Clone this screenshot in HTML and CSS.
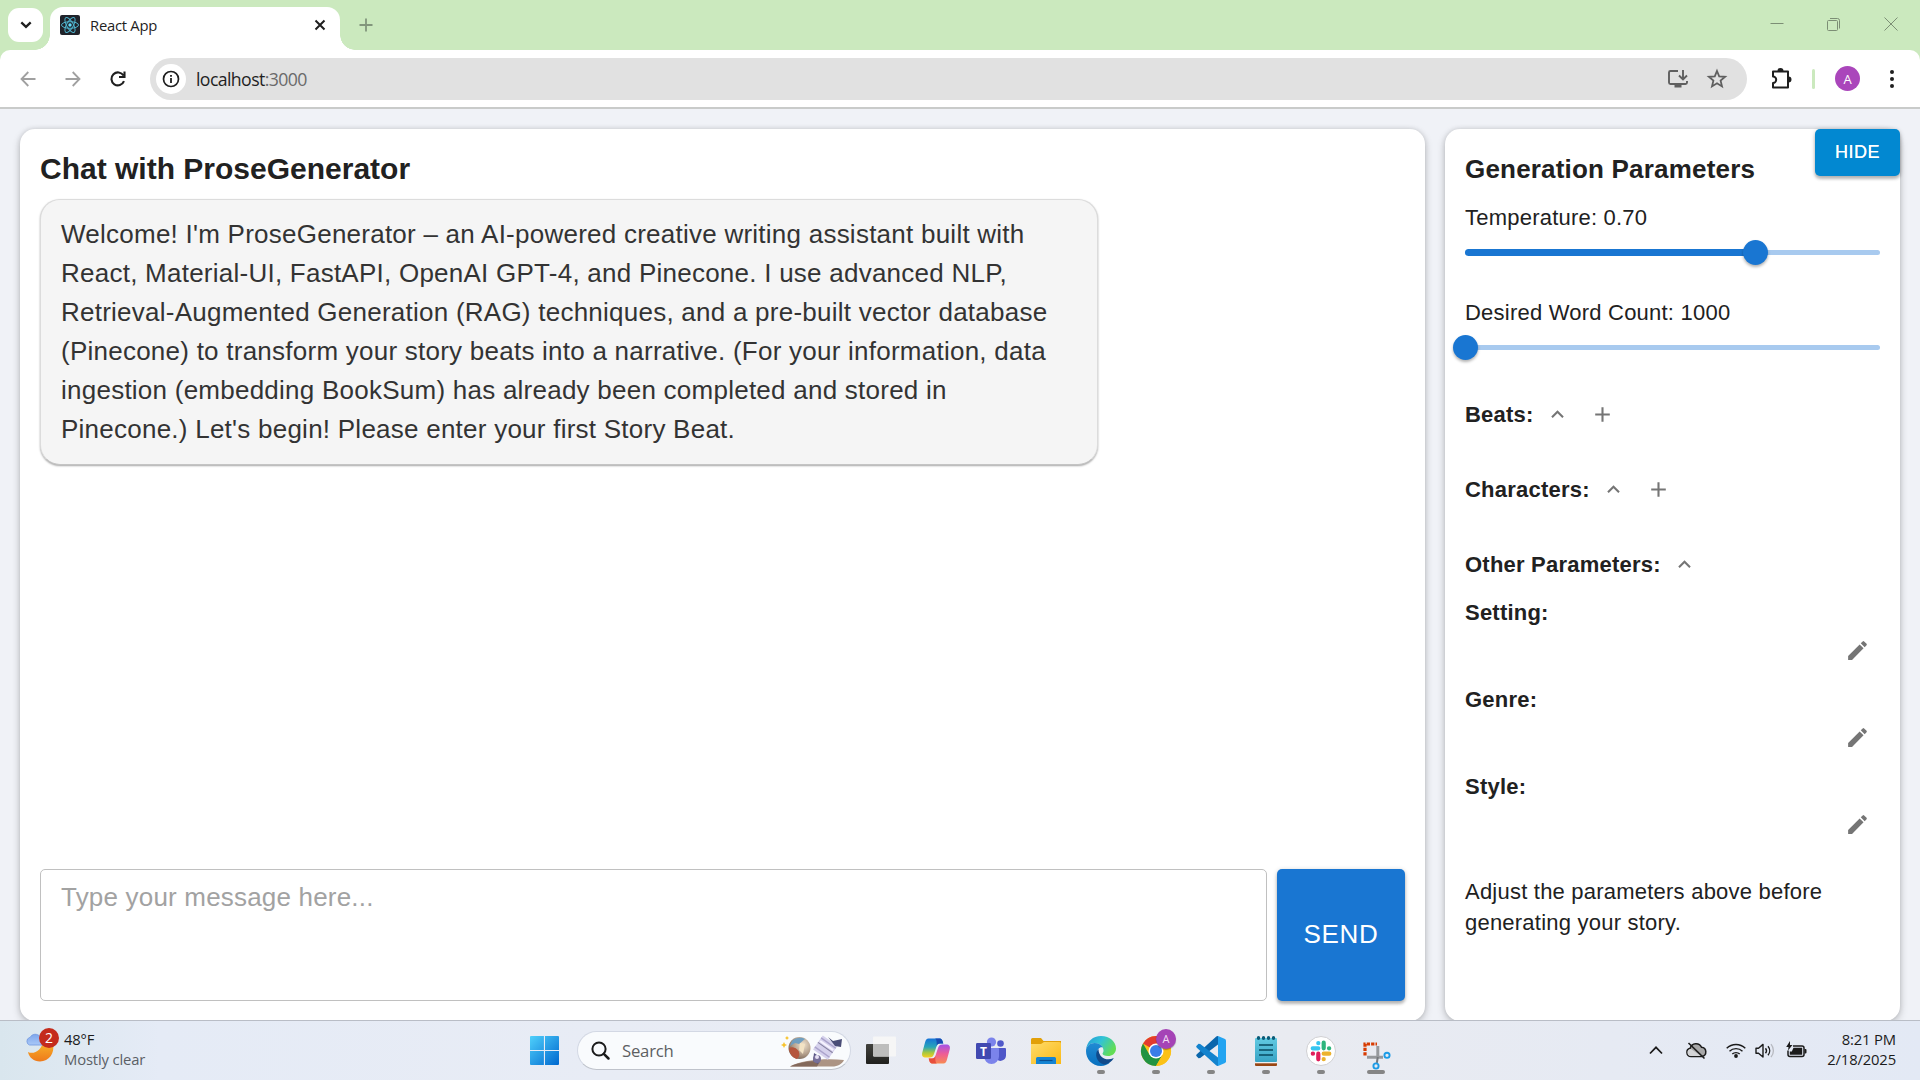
FILE: index.html
```
<!DOCTYPE html>
<html lang="en">
<head>
<meta charset="utf-8">
<title>React App</title>
<link rel="stylesheet" href="styles.css">
</head>
<body>
<header class="tabstrip">
  <button class="tab-search"><svg width="12" height="8" viewBox="0 0 12 8"><path d="M1.3 1.3 6 5.8l4.700-4.500" fill="none" stroke="#1f1f1f" stroke-width="2.300"/></svg></button>
  <div class="tab">
    <svg class="favicon" width="20" height="20" viewBox="0 0 20 20"><rect width="20" height="20" rx="2" fill="#20232a"/><g fill="none" stroke="#4fb3cc" stroke-width="1"><ellipse cx="10" cy="10" rx="8.500" ry="3.300"/><ellipse cx="10" cy="10" rx="8.500" ry="3.300" transform="rotate(60 10 10)"/><ellipse cx="10" cy="10" rx="8.500" ry="3.300" transform="rotate(120 10 10)"/></g><circle cx="10" cy="10" r="1.700" fill="#61dafb"/></svg>
    <span class="tab-title">React App</span>
    <svg class="tab-close" width="12" height="12" viewBox="0 0 12 12"><path d="M1.500 1.500l9 9m0-9l-9 9" stroke="#1f1f1f" stroke-width="2"/></svg>
  </div>
  <svg class="tab-new" width="14" height="14" viewBox="0 0 14 14"><path d="M7 .5v13M.5 7h13" stroke="#82967c" stroke-width="1.800"/></svg>
  <div class="window-controls">
    <svg width="14" height="14" viewBox="0 0 14 14"><path d="M.5 6.500h13" stroke="#7c8e75"/></svg>
    <svg width="14" height="14" viewBox="0 0 14 14"><rect x=".5" y="3.500" width="10" height="10" rx="1" fill="none" stroke="#7c8e75"/><path d="M3 1.500h7.500a2 2 0 0 1 2 2v8" fill="none" stroke="#7c8e75"/></svg>
    <svg width="14" height="14" viewBox="0 0 14 14"><path d="M.5.5l13 13m0-13l-13 13" stroke="#7c8e75"/></svg>
  </div>
</header>
<div class="toolbar-back">
<nav class="toolbar">
  <div class="nav-buttons">
    <svg width="16" height="16" viewBox="0 0 16 16"><path d="M8.300 1 1.500 8l6.800 7M1.500 8H15.500" fill="none" stroke="#a0a0a0" stroke-width="1.800"/></svg>
    <svg width="16" height="16" viewBox="0 0 16 16"><path d="M7.700 1l6.800 7-6.800 7M14.500 8H.5" fill="none" stroke="#a0a0a0" stroke-width="1.800"/></svg>
    <svg width="16" height="16" viewBox="0 0 16 16"><path d="M14 10.200A6.500 6.500 0 1 1 13.500 4.500M14.500.5V6H9" fill="none" stroke="#1f1f1f" stroke-width="2.100"/></svg>
  </div>
  <div class="omnibox">
    <span class="site-info"><svg width="18" height="18" viewBox="0 0 18 18"><circle cx="9" cy="9" r="7.500" fill="none" stroke="#1f1f1f" stroke-width="1.700"/><path d="M9 8v5M9 5v1.800" stroke="#1f1f1f" stroke-width="1.800"/></svg></span>
    <span class="url">localhost<span class="port">:3000</span></span>
    <svg class="install" width="22" height="20" viewBox="0 0 22 20"><path d="M11 2H3.500A1.500 1.500 0 0 0 2 3.500v10A1.500 1.500 0 0 0 3.500 15h15a1.500 1.500 0 0 0 1.500-1.500V12M16 1v9M12 6.500l4 4 4-4" fill="none" stroke="#5f5f5f" stroke-width="1.900"/><path d="M7.500 15h7v3.500h-7z" fill="#5f5f5f"/></svg>
    <svg width="20" height="20" viewBox="0 0 20 20"><path d="M10 2l2.200 5.400 5.900.4-4.500 3.800 1.400 5.800-5-3.100-5 3.100 1.400-5.800L1.900 7.800l5.900-.4z" fill="none" stroke="#5f5f5f" stroke-width="1.800"/></svg>
  </div>
  <svg class="puzzle" width="22" height="22" viewBox="0 0 22 22"><path d="M3 3.500h15v16H3V15a3.200 3.200 0 0 0 0-6.400z" fill="none" stroke="#1f1f1f" stroke-width="2" stroke-linejoin="round"/><path d="M7.500 3a3 3 0 0 1 6 0zM18.500 8.500a3 3 0 0 1 0 6z" fill="#1f1f1f"/></svg>
  <span class="divider"></span>
  <span class="avatar">A</span>
  <svg class="dots" width="4" height="20" viewBox="0 0 4 20"><g fill="#1f1f1f"><circle cx="2" cy="3" r="2"/><circle cx="2" cy="10" r="2"/><circle cx="2" cy="17" r="2"/></g></svg>
</nav>
</div>
<main class="page">
  <section class="chat">
    <h1>Chat with ProseGenerator</h1>
    <div class="bubble">Welcome! I'm ProseGenerator – an AI-powered creative writing assistant built with<br>React, Material-UI, FastAPI, OpenAI GPT-4, and Pinecone. I use advanced NLP,<br>Retrieval-Augmented Generation (RAG) techniques, and a pre-built vector database<br>(Pinecone) to transform your story beats into a narrative. (For your information, data<br>ingestion (embedding BookSum) has already been completed and stored in<br>Pinecone.) Let's begin! Please enter your first Story Beat.</div>
    <div class="composer">
      <div class="input">Type your message here...</div>
      <button class="send">SEND</button>
    </div>
  </section>
  <aside class="params">
    <button class="hide">HIDE</button>
    <h2>Generation Parameters</h2>
    <p class="label">Temperature: 0.70</p>
    <div class="slider"><span class="fill" style="width:70%"></span><span class="thumb" style="left:70%"></span></div>
    <p class="label count">Desired Word Count: 1000</p>
    <div class="slider"><span class="thumb" style="left:0%"></span></div>
    <div class="group first"><b>Beats:</b>
      <svg viewBox="0 0 24 24"><path d="m12 8-6 6 1.410 1.410L12 10.830l4.590 4.580L18 14z"/></svg>
      <svg class="add" viewBox="0 0 24 24"><path d="M19 13h-6v6h-2v-6H5v-2h6V5h2v6h6z"/></svg></div>
    <div class="group"><b>Characters:</b>
      <svg viewBox="0 0 24 24"><path d="m12 8-6 6 1.410 1.410L12 10.830l4.590 4.580L18 14z"/></svg>
      <svg class="add" viewBox="0 0 24 24"><path d="M19 13h-6v6h-2v-6H5v-2h6V5h2v6h6z"/></svg></div>
    <div class="group"><b>Other Parameters:</b>
      <svg viewBox="0 0 24 24"><path d="m12 8-6 6 1.410 1.410L12 10.830l4.590 4.580L18 14z"/></svg></div>
    <div class="field"><b>Setting:</b><svg viewBox="0 0 24 24"><path d="M3 17.250V21h3.750L17.810 9.940l-3.750-3.750zM20.710 7.040c.39-.39.39-1.020 0-1.410l-2.340-2.340a.9959.9959 0 0 0-1.410 0l-1.830 1.830 3.750 3.750z"/></svg></div>
    <div class="field"><b>Genre:</b><svg viewBox="0 0 24 24"><path d="M3 17.250V21h3.750L17.810 9.940l-3.750-3.750zM20.710 7.040c.39-.39.39-1.020 0-1.410l-2.340-2.340a.9959.9959 0 0 0-1.410 0l-1.830 1.830 3.750 3.750z"/></svg></div>
    <div class="field"><b>Style:</b><svg viewBox="0 0 24 24"><path d="M3 17.250V21h3.750L17.810 9.940l-3.750-3.750zM20.710 7.040c.39-.39.39-1.020 0-1.410l-2.340-2.340a.9959.9959 0 0 0-1.410 0l-1.830 1.830 3.750 3.750z"/></svg></div>
    <p class="hint">Adjust the parameters above before<br>generating your story.</p>
  </aside>
</main>
<footer class="taskbar">
  <div class="weather">
    <svg width="36" height="36" viewBox="0 0 36 36">
      <defs><linearGradient id="moon" x1="0" y1="0" x2="0" y2="1"><stop offset="0" stop-color="#f8b62a"/><stop offset="1" stop-color="#ee7a1b"/></linearGradient><linearGradient id="cloud" x1="0" y1="0" x2="0" y2="1"><stop offset="0" stop-color="#7ea6ec"/><stop offset="1" stop-color="#a9c8f7"/></linearGradient></defs>
      <path d="M3 24c6 3 14-2 15-11l10 3c2 9-4 17.500-13 17.500C9 33.500 4 29.500 3 24z" fill="url(#moon)"/>
      <path d="M4.500 17a4 4 0 0 1 0-7.500h.5a6 6 0 0 1 10-1 5.500 5.500 0 0 1 4 8.500z" fill="url(#cloud)" stroke="#6f97e0" stroke-width=".8"/>
      <circle cx="24" cy="10" r="10" fill="#c42b1c"/><text x="24" y="15" text-anchor="middle" class="badge-text">2</text>
    </svg>
    <div class="weather-text"><span>48°F</span><span class="muted">Mostly clear</span></div>
  </div>
  <div class="apps">
    <svg class="start" width="29" height="29" viewBox="0 0 29 29"><defs><linearGradient id="win" x1="0" y1="0" x2="1" y2="1"><stop offset="0" stop-color="#4fd0fb"/><stop offset="1" stop-color="#0068cf"/></linearGradient></defs><path d="M1 0h12.900v13.900H0V1a1 1 0 0 1 1-1zM15 0h13a1 1 0 0 1 1 1v12.900H15zM0 15h13.900v14H1a1 1 0 0 1-1-1zM15 15h14v13a1 1 0 0 1-1 1H15z" fill="url(#win)"/></svg>
    <div class="search">
      <svg width="19" height="19" viewBox="0 0 19 19"><circle cx="8" cy="8" r="6.600" fill="none" stroke="#1b1b1b" stroke-width="2"/><path d="M12.800 12.800l4.700 4.700" stroke="#1b1b1b" stroke-width="2.500" stroke-linecap="round"/></svg>
      <span>Search</span>
      <svg class="space" width="64" height="34" viewBox="0 0 64 34">
        <defs><radialGradient id="planet" cx=".65" cy=".35" r=".75"><stop offset="0" stop-color="#f0e3cf"/><stop offset=".6" stop-color="#b09c88"/><stop offset="1" stop-color="#6e5a4c"/></radialGradient></defs>
        <path d="M9 32.500C20 26 45 24 63 26c-2 4-6 6.500-12 6.500z" fill="#ac9484"/><path d="M9 32.500c8-4 20-6 30-5l-3 5z" fill="#83695b"/>
        <circle cx="18.500" cy="14" r="11" fill="url(#planet)"/><path d="M8 14c4-2 9 1 10 4s0 5-2 7c-4-1-8-5-8-11z" fill="#b5563d"/><path d="M11 7c4-4 10-4 13-2l-6 5-4-1-5 3z" fill="#719fc0"/><path d="M19 9l5 1-2 10-4-4z" fill="#f3e3c4"/>
        <g transform="rotate(35 44 14)"><rect x="35" y="5" width="18" height="17" fill="#d5d1ec"/><path d="M35 8h18M35 19h18" stroke="#aaa3cb" stroke-width="1.500"/><path d="M35 13.500h18" stroke="#85809f" stroke-width="1"/><path d="M36 11h16" stroke="#f6f3ff" stroke-width="2"/></g>
        <path d="M47 3l5 4 9-2-1 8-6-1-3-4z" fill="#4a4d77"/><path d="M33 19l6 4-2 7-5-3z" fill="#575584"/><circle cx="36" cy="25" r="4" fill="#777099"/><circle cx="36" cy="23" r="2" fill="#e7e1f5"/>
        <path d="M3 8l1 2 2 1-2 1-1 2-1-2-2-1 2-1zM6 2l.8 1.200 1.200.8-1.200.8L6 6l-.8-1.200L4 4l1.200-.8z" fill="#f7c32e"/>
      </svg>
    </div>
    <div class="app"><svg width="32" height="32" viewBox="0 0 32 32"><defs><linearGradient id="tv" x1="0" y1="0" x2="0" y2="1"><stop offset="0" stop-color="#42423e"/><stop offset="1" stop-color="#20201d"/></linearGradient></defs><rect x="1" y="9" width="23" height="20" rx="1" fill="url(#tv)"/><rect x="8" y="1.500" width="23" height="20" rx="1" fill="#f6f6f6"/><path d="M8 9h16v12.500H9l-1-1z" fill="#bdbdbc"/></svg></div>
    <div class="app"><svg width="30" height="30" viewBox="0 0 30 30"><defs><linearGradient id="cpa" x1="0" y1="0" x2="0" y2="1"><stop offset="0" stop-color="#1573d8"/><stop offset=".45" stop-color="#28a5b8"/><stop offset=".75" stop-color="#a8c83e"/><stop offset="1" stop-color="#f8cf21"/></linearGradient><linearGradient id="cpb" x1="0" y1="1" x2="0" y2="0"><stop offset="0" stop-color="#f88a52"/><stop offset=".5" stop-color="#ef5d95"/><stop offset="1" stop-color="#a353e8"/></linearGradient></defs><path d="M7.500 2.500H18c3 0 3.500 2 4.300 5H19c-2 0-3 1-3.700 3.500L13 18c-.8 2.500-2 3.500-4.500 3.500H5c-3.500 0-4.500-2-3.700-5L4 6.500c.7-2.500 1.700-4 3.500-4z" fill="url(#cpa)"/><path d="M14 2.500h4c3 0 3.500 2 4.300 5H19c-2 0-3 1-3.500 3C16 6 15.500 3 14 2.500z" fill="#174bb2"/><path d="M22.500 27.500H12c-3 0-3.500-2-4.300-5H11c2 0 3-1 3.700-3.500L17 12c.8-2.500 2-3.500 4.500-3.500H25c3.500 0 4.500 2 3.700 5L26 23.500c-.7 2.500-1.700 4-3.500 4z" fill="url(#cpb)"/><path d="M16 27.500h-4c-3 0-3.500-2-4.300-5H11c2 0 3-1 3.500-3-.5 4.500 0 7.500 1.500 8z" fill="#e84f3c"/></svg></div>
    <div class="app"><svg width="32" height="30" viewBox="0 0 32 30"><circle cx="25.500" cy="7.500" r="3.300" fill="#5059c9"/><path d="M21 12h9a1 1 0 0 1 1 1v6.500a5.500 5.500 0 0 1-10 3z" fill="#4f57c8"/><circle cx="16.500" cy="6" r="4.600" fill="#7b83eb"/><path d="M9 12h14a1 1 0 0 1 1 1v7.500a7.500 7.500 0 0 1-15 0z" fill="#7b83eb"/><rect x="1" y="7" width="15" height="16" rx="1.200" fill="#4149b1"/><text x="8.500" y="19.500" text-anchor="middle" class="teams-text">T</text></svg></div>
    <div class="app"><svg width="30" height="30" viewBox="0 0 30 30"><defs><linearGradient id="fol" x1="0" y1="0" x2="1" y2="1"><stop offset="0" stop-color="#ffdc6c"/><stop offset="1" stop-color="#fab915"/></linearGradient></defs><path d="M1.500 2H10l2.500 3H30v5H0V3.500A1.500 1.500 0 0 1 1.500 2z" fill="#e2a009"/><path d="M0 8h10l3-2h15.500A1.500 1.500 0 0 1 30 7.500V28H0z" fill="url(#fol)"/><path d="M5 28v-5.500A1.500 1.500 0 0 1 6.500 21h17a1.500 1.500 0 0 1 1.500 1.500V28z" fill="#1584d3"/><path d="M8.500 24.500h13" stroke="#0b4f91" stroke-width="1.200"/></svg></div>
    <div class="app running"><svg width="30" height="30" viewBox="0 0 30 30"><defs><linearGradient id="eda" x1="0" y1="0" x2="1" y2=".5"><stop offset="0" stop-color="#2498d7"/><stop offset=".5" stop-color="#31c3d6"/><stop offset="1" stop-color="#62dd55"/></linearGradient><linearGradient id="edb" x1="0" y1="0" x2="0" y2="1"><stop offset="0" stop-color="#218bd3"/><stop offset="1" stop-color="#0870bf"/></linearGradient></defs><path d="M0 14C1 5 7 0 15 0c9 0 15 6 15 12.500 0 5-4 7.500-8 7.500-3.500 0-5.500-1.300-5.500-2.300 0-.8 1-1.200 1-3.200C17.500 10 13 7 8.500 7 4 7 1 10 0 14z" fill="url(#eda)"/><path d="M0 15c0-4.500 4-8 8.500-8 4 0 7 2 8.500 4.500-3-1-6 1.500-6 6C11 24 17 28 24 26.500 21.500 28.800 18.500 30 15 30 6 30 0 23 0 15z" fill="url(#edb)"/><path d="M12.500 13c-5 5-1.500 14 5.500 15.500 4-.5 8-3 9.800-6.500-4 2-9 1.800-12-1-2-1.900-3.300-4.500-3.300-8z" fill="#114a8b"/></svg></div>
    <div class="app running"><svg width="30" height="30" viewBox="0 0 30 30"><circle cx="15" cy="15" r="15" fill="#fbc116"/><path d="M15 15 2 7.500A15 15 0 0 1 28 7.500H15z" fill="#e33b2e"/><path d="M15 30A15 15 0 0 1 2 7.500l6.500 11.200L15 22l6.500-3.300z" fill="#229342"/><path d="M15 7.500h13A15 15 0 0 1 15 30l6.500-11.200z" fill="#fbc116"/><circle cx="15" cy="15" r="7.500" fill="#fff"/><circle cx="15" cy="15" r="6" fill="#3b7de9"/></svg><span class="profile">A</span></div>
    <div class="app running"><svg width="30" height="30" viewBox="0 0 30 30"><path d="M22 0l7 3a2 2 0 0 1 1 1.700v20.600a2 2 0 0 1-1 1.700l-7 3z" fill="#23a4f1"/><path d="M22 0v8.500L4.200 22 2.500 22.200.8 20.500a1.400 1.400 0 0 1 0-2.200L20 .8A2.500 2.500 0 0 1 22 0z" fill="#0a66ac"/><path d="M22 30v-8.500L4.200 8 2.500 7.800.8 9.500a1.400 1.400 0 0 0 0 2.200L20 29.200a2.500 2.500 0 0 0 2 .8z" fill="#1383ce"/></svg></div>
    <div class="app running"><svg width="22" height="30" viewBox="0 0 22 30"><defs><linearGradient id="note" x1="0" y1="0" x2="0" y2="1"><stop offset="0" stop-color="#62cae2"/><stop offset="1" stop-color="#38a4c5"/></linearGradient></defs><rect y="25" width="22" height="5" rx="1" fill="#994613"/><rect y="24" width="22" height="3.300" fill="#efefef"/><rect y="2" width="22" height="24" rx="1" fill="url(#note)"/><path d="M4 9h14M4 14h14M4 19h14" stroke="#084b62" stroke-width="1.700"/><g fill="#0b5b78"><ellipse cx="3.500" cy="2" rx="1.700" ry="2"/><ellipse cx="8.500" cy="2" rx="1.700" ry="2"/><ellipse cx="13.500" cy="2" rx="1.700" ry="2"/><ellipse cx="18.500" cy="2" rx="1.700" ry="2"/></g></svg></div>
    <div class="app running"><svg width="30" height="30" viewBox="0 0 30 30"><circle cx="15" cy="15" r="14.500" fill="#fff" stroke="#d0d0d3"/><g stroke-width="4.200" stroke-linecap="round"><path d="M12.300 7v.2M6.700 12.300h5.600" stroke="#36c5f0"/><path d="M17.700 6.700v5.600M23 12.300h.2" stroke="#2eb67d"/><path d="M17.700 17.700h5.600M17.700 23v.2" stroke="#ecb22e"/><path d="M12.300 17.700v5.600M7 17.700h-.2" stroke="#e01e5a"/></g></svg></div>
    <div class="app running active"><svg width="28" height="30" viewBox="0 0 28 30"><path d="M3 19.500V8h12" fill="none" stroke="#d83b01" stroke-width="3.200" stroke-dasharray="3.300 1.100"/><path d="M15.800 10v12M5 21.200h16" stroke="#96999d" stroke-width="3"/><path d="M15.800 21l-1 6" stroke="#75787c" stroke-width="2"/><circle cx="25" cy="19.300" r="2.600" fill="none" stroke="#1c9be6" stroke-width="1.900"/><circle cx="14" cy="30" r="2.600" fill="none" stroke="#1c9be6" stroke-width="1.900"/></svg></div>
  </div>
  <div class="tray">
    <svg class="chev" width="14" height="9" viewBox="0 0 14 9"><path d="M1 7.500l6-6.200 6 6.200" fill="none" stroke="#1b1b1b" stroke-width="1.700"/></svg>
    <svg class="onedrive" width="21" height="18" viewBox="0 0 21 18"><path d="M5 14.500a4.200 4.200 0 0 1-.8-8.300A6 6 0 0 1 15.500 5.200 4.700 4.700 0 0 1 16 14.500z" fill="#a8a8a9" stroke="#1b1b1b" stroke-width="1.500"/><path d="M5 14a3.400 3.400 0 0 1 0-7l10 7z" fill="#d3d4d6"/><path d="M2.500 1l16 15.500" stroke="#1b1b1b" stroke-width="1.600"/></svg>
    <svg class="wifi" width="20" height="16" viewBox="0 0 20 16"><g fill="none" stroke="#1b1b1b" stroke-width="1.400"><path d="M.7 5.300a13.200 13.200 0 0 1 18.600 0M3.500 8.300a9.200 9.200 0 0 1 13 0M6.300 11.100a5.300 5.300 0 0 1 7.400 0"/></g><circle cx="10" cy="13" r="1.900" fill="#1b1b1b"/></svg>
    <svg class="vol" width="20" height="16" viewBox="0 0 20 16"><path d="M1 5.200h2.500L8 1.400V14l-4.500-3.800H1z" fill="none" stroke="#1b1b1b" stroke-width="1.400" stroke-linejoin="round"/><path d="M10.500 5.200a4 4 0 0 1 0 5M13 3.200a7 7 0 0 1 0 9" fill="none" stroke="#1b1b1b" stroke-width="1.400"/><path d="M16 1.200a10 10 0 0 1 0 13" fill="none" stroke="#b7b9c0" stroke-width="1.300"/></svg>
    <svg class="bat" width="21" height="18" viewBox="0 0 21 18"><path d="M7 4h9a2 2 0 0 1 2 2v6.500a2 2 0 0 1-2 2H4a2 2 0 0 1-2-2V8.500" fill="none" stroke="#1b1b1b" stroke-width="1.500"/><path d="M7.500 5.800h8.700v7H3.800V9.500h2zM18.500 7h1a1 1 0 0 1 1 1v2.500a1 1 0 0 1-1 1h-1zM4-1L.2 5h2.300L2 8.500 6.500 3H4z" fill="#1b1b1b"/></svg>
    <div class="clock"><span>8:21 PM</span><span>2/18/2025</span></div>
  </div>
</footer>
</body>
</html>
```
FILE: styles.css
```
* { box-sizing: border-box; }
body {
  margin: 0;
  width: 1920px;
  height: 1080px;
  overflow: hidden;
  display: flex;
  flex-direction: column;
  font-family: "Liberation Sans", Arial, sans-serif;
  color: #212121;
}
svg { display: block; flex: none; overflow: visible; }
button { border: 0; padding: 0; font: inherit; }
h1, h2, p { margin: 0; }

/* Browser chrome */
.tabstrip, .toolbar, .taskbar { font-family: "Open Sans", "Noto Sans", sans-serif; }
.tabstrip { height: 50px; flex: none; background: #cbe9be; display: flex; align-items: center; }
.tab-search {
  width: 35px; height: 34px; margin: 0 7px 0 8px; border-radius: 11px; background: #fff;
  display: flex; align-items: center; justify-content: center;
}
.tab {
  width: 290px; height: 43px; align-self: flex-end; background: #fff; border-radius: 13px 13px 0 0;
  display: flex; align-items: center; padding: 0 14px 7px 10px; position: relative;
}
.tab::before, .tab::after { content: ""; position: absolute; bottom: 0; width: 15px; height: 15px; }
.tab::before { left: -15px; background: radial-gradient(circle at 0 0, transparent 14.5px, #fff 15px); }
.tab::after { right: -15px; background: radial-gradient(circle at 100% 0, transparent 14.5px, #fff 15px); }
.tab-title { margin-left: 10px; font-size: 14.8px; letter-spacing: -0.25px; color: #1f1f1f; flex: 1; }
.tab-new { margin-left: 19px; }
.window-controls { display: flex; gap: 43px; margin: 0 22px 2px auto; }
.toolbar-back { background: #cbe9be; flex: none; }
.toolbar {
  height: 59px; background: #fff; border-radius: 10px 10px 0 0; border-bottom: 2px solid #c9cbca;
  display: flex; align-items: center;
}
.nav-buttons { display: flex; gap: 29px; margin-left: 20px; width: 130px; }
.omnibox {
  width: 1597px; height: 42px; border-radius: 21px; background: #e1e1e1;
  display: flex; align-items: center; padding: 0 20px 0 6px;
}
.site-info {
  width: 30px; height: 30px; border-radius: 50%; background: #fff;
  display: flex; align-items: center; justify-content: center;
}
.url { margin-left: 10px; font-size: 17.7px; letter-spacing: -0.6px; flex: 1; color: #1f1f1f; }
.port { color: #6a6a6a; }
.install { margin-right: 18px; }
.puzzle { margin-left: 23px; }
.divider { width: 3px; height: 20px; border-radius: 2px; background: #cbe9be; margin-left: 20px; }
.avatar {
  width: 25px; height: 25px; border-radius: 50%; background: #aa46bb; color: #fff; margin-left: 20px;
  font-size: 13px; display: flex; align-items: center; justify-content: center;
}
.dots { margin-left: 30px; }

/* Application page */
.page {
  height: 911px; flex: none; background: #f0f2f7; padding: 20px 20px 0; overflow: hidden;
  display: flex; gap: 20px; align-items: flex-start;
}
.chat, .params {
  height: 892px; background: #fff; border-radius: 15px;
  box-shadow: 0 3px 8px rgba(0, 0, 0, .2), 0 0 5px rgba(0, 0, 0, .12);
}
.chat { width: 1405px; padding: 20px; display: flex; flex-direction: column; }
h1 { font-size: 30px; line-height: 40px; }
.bubble {
  width: 1058px; height: 266px; margin-top: 10px; padding: 15px 20px 12px; border: 1px solid #dcdcdc;
  border-bottom-color: #c4c4c4; border-radius: 20px; background: #f5f5f5; box-shadow: 0 1px 2px rgba(0, 0, 0, .35);
  font-size: 26px; line-height: 39px; letter-spacing: .244px; color: #333; white-space: nowrap;
}
.composer { margin-top: auto; display: flex; gap: 10px; height: 132px; }
.input {
  flex: 1; border: 1px solid #c0c0c0; border-radius: 5px; padding: 9px 20px;
  font-size: 26px; line-height: 36px; letter-spacing: .19px; color: #a2a2a2;
}
.send {
  width: 128px; border-radius: 5px; background: #1976d2; color: #fff; font-size: 26px; letter-spacing: .74px;
  padding-bottom: 2px;
  box-shadow: 0 3px 3px rgba(0, 0, 0, .2), 0 1px 5px rgba(0, 0, 0, .2);
}

.params { width: 455px; padding: 20px; position: relative; font-size: 22px; line-height: 31px; letter-spacing: .22px; }
.hide {
  position: absolute; top: 0; right: 0; width: 85px; height: 47px; border-radius: 5px;
  background: #0288d1; color: #fff; font-size: 18px; letter-spacing: .5px; text-shadow: 0 0 .6px #fff;
  box-shadow: 0 3px 3px rgba(0, 0, 0, .2), 0 1px 5px rgba(0, 0, 0, .2);
}
h2 { font-size: 26px; line-height: 40px; letter-spacing: .19px; }
.label { margin-top: 13px; }
.label.count { margin-top: 29px; }
.slider { position: relative; height: 32px; margin-top: 3px; display: flex; align-items: center; }
.slider::before { content: ""; position: absolute; width: 100%; height: 5px; border-radius: 3px; background: #a8caef; }
.fill { position: relative; height: 7px; border-radius: 4px; background: #1976d2; }
.thumb {
  position: absolute; width: 25px; height: 25px; margin-left: -12.5px; border-radius: 50%; background: #1976d2;
  box-shadow: 0 2px 3px rgba(0, 0, 0, .3);
}
.group { display: flex; align-items: center; height: 40px; margin-top: 35px; }
.group.first { margin-top: 31px; }
.group svg { width: 25px; height: 25px; fill: #757575; margin: 1px 0 0 11px; }
.group .add { margin-left: 20px; }
.field { height: 87px; display: flex; flex-direction: column; padding-top: 13px; }
.field svg { width: 25px; height: 25px; fill: #757575; align-self: flex-end; margin: 9.5px 10px 0 0; }
.hint { margin-top: 31px; line-height: 31.3px; }

/* Taskbar */
.taskbar {
  height: 60px; flex: none; border-top: 1px solid #b9bdc6; display: grid; grid-template-columns: 530px auto 1fr;
  background: linear-gradient(90deg, #d9e6ee, #e5ebf6 160px, #e8ecf5 600px, #e9ebf1 1300px, #e3e9f5);
  font-size: 14.8px; color: #1b1b1b;
}
.weather { display: flex; padding: 7px 0 0 25px; }
.badge-text { fill: #fff; font: 14px "Open Sans", sans-serif; }
.weather-text { display: flex; flex-direction: column; line-height: 20px; margin: 1px 0 0 3px; letter-spacing: -.15px; }
.weather-text .muted { color: #5b6066; }
.apps { display: flex; align-items: center; }
.start { margin-right: 18px; }
.search {
  width: 274px; height: 39px; border-radius: 20px; border: 1px solid #d3d8e4; border-bottom-color: #bfc3cb; background: #f9fbfd;
  display: flex; align-items: center; padding: 0 5px 0 13px; margin-right: 2px;
}
.search span { flex: 1; margin-left: 12px; font-size: 16.7px; letter-spacing: -.2px; color: #5d5f62; }
.app { width: 55px; height: 59px; display: flex; align-items: center; justify-content: center; position: relative; }
.app.running::after {
  content: ""; position: absolute; bottom: 6px; width: 8px; height: 4px; border-radius: 2px; background: #858585;
}
.app.active::after { width: 18px; }
.teams-text { fill: #fff; font: bold 12px "Open Sans", sans-serif; }
.profile {
  position: absolute; left: 28px; top: 8px; width: 20px; height: 20px; border-radius: 50%; background: #a543b6;
  box-shadow: 0 1px 1px rgba(0, 0, 0, .3); color: #f2dcf5; font-size: 11px; line-height: 20px; text-align: center;
}
.tray { display: flex; align-items: center; justify-content: flex-end; padding-right: 24px; }
.onedrive { margin-left: 23px; }
.wifi { margin-left: 19px; }
.vol { margin-left: 9px; }
.bat { margin-left: 11px; }
.clock {
  width: 89px; display: flex; flex-direction: column; align-items: flex-end; line-height: 20px; letter-spacing: -.15px;
  margin-bottom: 3px;
}
```
